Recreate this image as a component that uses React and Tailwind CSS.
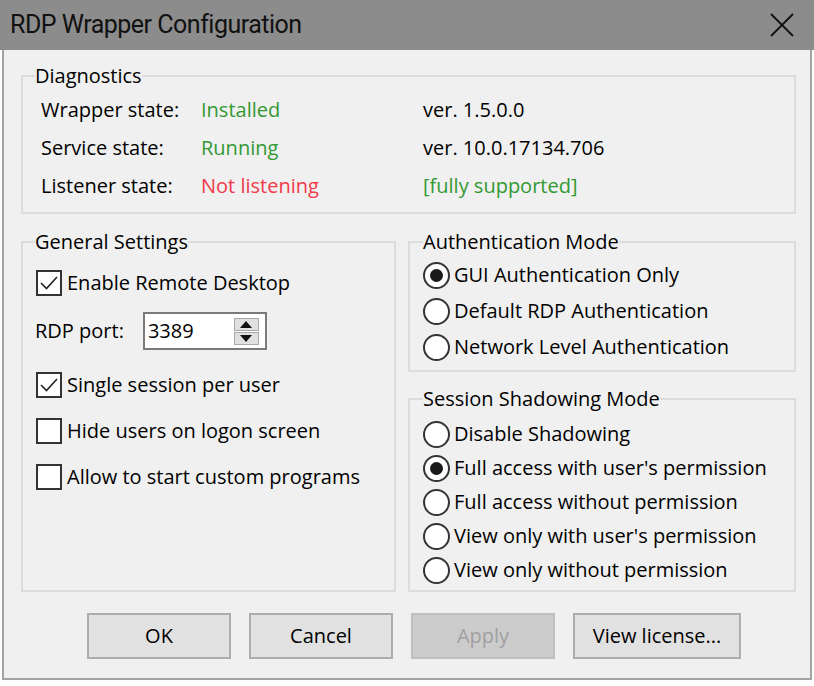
import React from 'react'

const font = { fontFamily: '"Open Sans", "Noto Sans", Arial, sans-serif' }

const CheckRow = ({ checked, label, className }) => (
  <div className={'flex items-center h-[34px] ' + (className || '')}>
    <div className="w-[26px] h-[26px] border-2 border-[#333] bg-white flex items-center justify-center shrink-0">
      {checked ? (
        <svg width="20" height="20" viewBox="0 0 20 20">
          <path d="M2 10 L7.5 15.5 L18 4" fill="none" stroke="#222" strokeWidth="1.6" />
        </svg>
      ) : null}
    </div>
    <span className="ml-[5px]">{label}</span>
  </div>
)

const RadioRow = ({ checked, label, className }) => (
  <div className={'flex items-center ' + (className || '')}>
    <div className="w-[27px] h-[27px] rounded-full border-2 border-[#333] bg-white flex items-center justify-center shrink-0">
      {checked ? <div className="w-[13px] h-[13px] rounded-full bg-[#1a1a1a]" /> : null}
    </div>
    <span className="ml-[4px]">{label}</span>
  </div>
)

const Button = ({ children, disabled, className }) => (
  <div
    className={
      'h-[46px] flex items-center justify-center border-2 ' +
      (disabled ? 'bg-[#cccccc] border-[#bfbfbf] text-[#a0a0a0] ' : 'bg-[#e1e1e1] border-[#adadad] text-black ') +
      (className || '')
    }
  >
    {children}
  </div>
)

export default function App() {
  return (
    <div style={font} className="w-[814px] h-[686px] bg-white text-[20px] leading-[24px] text-black flex flex-col">
      <div className="h-[50px] bg-[#8c8c8c] flex items-center justify-between pl-[10px] pr-[20px] shrink-0">
        <span style={{ fontFamily: '"Roboto", "Open Sans", sans-serif' }} className="text-[25px] tracking-[-0.5px] text-[#111]">
          RDP Wrapper Configuration
        </span>
        <svg width="24" height="24" viewBox="0 0 24 24">
          <path d="M1 1 L23 23 M23 1 L1 23" stroke="#111" strokeWidth="1.8" fill="none" />
        </svg>
      </div>

      <div className="mx-[2px] h-[630px] bg-[#f0f0f0] border-2 border-t-0 border-[#a3a3a3] flex flex-col pl-[17px] pr-[14px]">
        {/* Diagnostics */}
        <fieldset className="mt-[14px] border-2 border-[#dcdcdc] pl-[12px] pr-[12px] pb-[7px]">
          <legend className="px-0">Diagnostics</legend>
          <div className="pl-[6px] pt-[3px] grid grid-cols-[160px_222px_1fr]">
            <div className="h-[38px] flex items-center">Wrapper state:</div>
            <div className="h-[38px] flex items-center text-[#339933]">Installed</div>
            <div className="h-[38px] flex items-center">ver. 1.5.0.0</div>
            <div className="h-[38px] flex items-center">Service state:</div>
            <div className="h-[38px] flex items-center text-[#339933]">Running</div>
            <div className="h-[38px] flex items-center">ver. 10.0.17134.706</div>
            <div className="h-[38px] flex items-center">Listener state:</div>
            <div className="h-[38px] flex items-center text-[#f23a4a]">Not listening</div>
            <div className="h-[38px] flex items-center text-[#339933]">[fully supported]</div>
          </div>
        </fieldset>

        <div className="mt-[16px] flex gap-[12px] items-stretch">
          {/* General Settings */}
          <fieldset className="w-[375px] border-2 border-[#dcdcdc] pl-[12px] pr-[12px]">
            <legend className="px-0">General Settings</legend>
            <div className="pl-[1px] pt-[12px] flex flex-col">
              <CheckRow checked label="Enable Remote Desktop" />
              <div className="mt-[12px] flex items-center h-[38px]">
                <span className="-ml-[1px]">RDP port:</span>
                <div className="ml-[19px] w-[124px] h-[38px] border-2 border-[#7a7a7a] bg-white flex items-center justify-between pl-[3px] pr-[6px]">
                  <span>3389</span>
                  <div className="flex flex-col gap-[1px]">
                    <div className="w-[25px] h-[13px] bg-[#e0e0e0] border border-[#a8a8a8] flex items-center justify-center">
                      <svg width="12" height="7" viewBox="0 0 12 7"><path d="M0 7 L6 0 L12 7 Z" fill="#111" /></svg>
                    </div>
                    <div className="w-[25px] h-[13px] bg-[#e0e0e0] border border-[#a8a8a8] flex items-center justify-center">
                      <svg width="12" height="7" viewBox="0 0 12 7"><path d="M0 0 L6 7 L12 0 Z" fill="#111" /></svg>
                    </div>
                  </div>
                </div>
              </div>
              <CheckRow checked label="Single session per user" className="mt-[18px]" />
              <CheckRow label="Hide users on logon screen" className="mt-[12px]" />
              <CheckRow label="Allow to start custom programs" className="mt-[12px]" />
            </div>
          </fieldset>

          <div className="flex-1 flex flex-col">
            {/* Authentication Mode */}
            <fieldset className="border-2 border-[#dcdcdc] pl-[13px] pr-[12px] pb-[5px]">
              <legend className="px-0">Authentication Mode</legend>
              <div className="pt-[3px] flex flex-col">
                <RadioRow checked label="GUI Authentication Only" className="h-[36px]" />
                <RadioRow label="Default RDP Authentication" className="h-[36px]" />
                <RadioRow label="Network Level Authentication" className="h-[36px]" />
              </div>
            </fieldset>

            {/* Session Shadowing Mode */}
            <fieldset className="mt-[15px] flex-1 border-2 border-[#dcdcdc] pl-[13px] pr-[12px] pb-[3px]">
              <legend className="px-0">Session Shadowing Mode</legend>
              <div className="pt-[6px] flex flex-col">
                <RadioRow label="Disable Shadowing" className="h-[34px]" />
                <RadioRow checked label="Full access with user's permission" className="h-[34px]" />
                <RadioRow label="Full access without permission" className="h-[34px]" />
                <RadioRow label="View only with user's permission" className="h-[34px]" />
                <RadioRow label="View only without permission" className="h-[34px]" />
              </div>
            </fieldset>
          </div>
        </div>

        <div className="mt-[21px] pl-[66px] flex gap-[18px]">
          <Button className="w-[144px]">OK</Button>
          <Button className="w-[144px]">Cancel</Button>
          <Button disabled className="w-[144px]">Apply</Button>
          <Button className="w-[168px]">View license...</Button>
        </div>
      </div>
    </div>
  )
}
